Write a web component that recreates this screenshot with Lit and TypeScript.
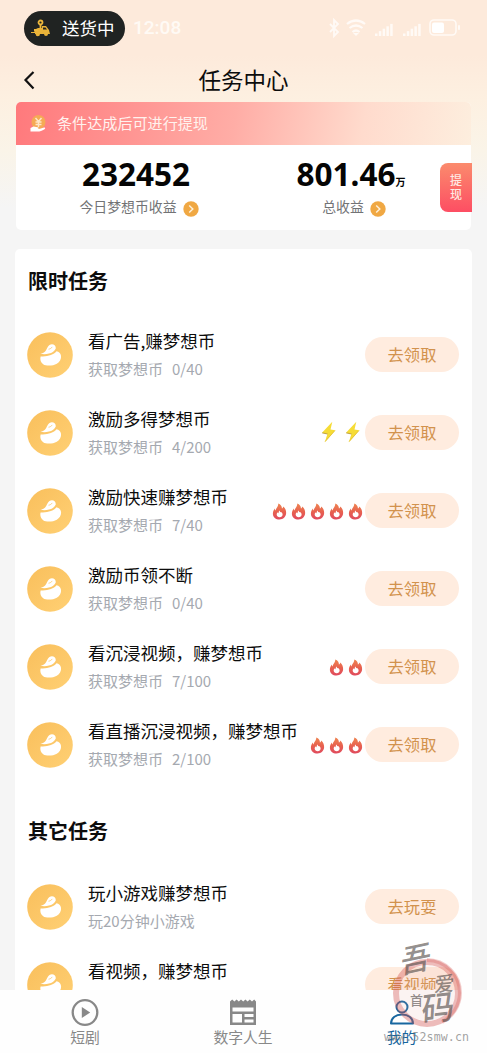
import { LitElement, html, svg, css } from "lit";
import { customElement, property } from "lit/decorators.js";

interface Task {
  title: string;
  note: string;
  count?: string;
  action: string;
  badge?: "fire" | "bolt";
  badges?: number;
}

const limited: Task[] = [
  { title: "看广告,赚梦想币", note: "获取梦想币", count: "0/40", action: "去领取" },
  { title: "激励多得梦想币", note: "获取梦想币", count: "4/200", action: "去领取", badge: "bolt", badges: 2 },
  { title: "激励快速赚梦想币", note: "获取梦想币", count: "7/40", action: "去领取", badge: "fire", badges: 5 },
  { title: "激励币领不断", note: "获取梦想币", count: "0/40", action: "去领取" },
  { title: "看沉浸视频，赚梦想币", note: "获取梦想币", count: "7/100", action: "去领取", badge: "fire", badges: 2 },
  { title: "看直播沉浸视频，赚梦想币", note: "获取梦想币", count: "2/100", action: "去领取", badge: "fire", badges: 3 },
];

const others: Task[] = [
  { title: "玩小游戏赚梦想币", note: "玩20分钟小游戏", action: "去玩耍" },
  { title: "看视频，赚梦想币", note: "", action: "看视频" },
];

const fire = html`<svg class="fire" width="15" height="17" viewBox="0 0 15 17">
  <defs>
    <linearGradient id="f" x1="0" y1="0" x2="0" y2="1">
      <stop offset="0" stop-color="#ee8552" />
      <stop offset=".5" stop-color="#e8624f" />
      <stop offset="1" stop-color="#e04a5e" />
    </linearGradient>
  </defs>
  <path fill="url(#f)" d="M6.200.6C8.800 1.500 10.100 3.500 9.900 5.600c.8-.3 1.200-1 1.200-2.100C13.500 5.300 14.300 8 14.100 10.600 13.800 14 11.200 16.500 7.500 16.500S1 14 .9 10.900C.8 8.800 1.600 6.900 2.900 5.400c0 .9.300 1.600.8 2C4 4.700 6.600 3.400 6.200.6z" />
  <path fill="#fff" d="M7.800 7.600c0 1.400.7 1.800 1.400 1.400 1 .8 1.500 1.800 1.400 2.800-.1 1.500-1.300 2.500-2.900 2.500s-2.900-1-3-2.500c-.1-1 .5-1.900 1.100-2.500 0 .6.300.9.700 1C6.600 9.300 6.800 8.200 7.800 7.600z" />
</svg>`;

const bolt = html`<svg class="bolt" width="15" height="22" viewBox="0 0 15 22">
  <path fill="#f6dc36" d="M11.300.8 1 11.800l5.400 1.100L3.800 21.200 14.200 9.300 9.500 8.400z" />
  <path fill="none" stroke="#b8983a" stroke-width=".9" d="M1.200 11.900l5.400 1.100" />
  <path fill="none" stroke="#e0bb2c" stroke-width=".8" d="M14 9.500 4.100 20.600" />
</svg>`;

@customElement("coin-badge")
class CoinBadge extends LitElement {
  static styles = css`
    :host { display: block; width: 46px; height: 46px; flex: none; }
    svg { display: block; }
  `;
  render() {
    return html`<svg width="46" height="46" viewBox="0 0 46 46">
      <defs>
        <linearGradient id="g" x1="0" y1="0" x2="1" y2="1">
          <stop offset="0" stop-color="#f9bf5c" />
          <stop offset="1" stop-color="#ffd074" />
        </linearGradient>
      </defs>
      <circle cx="23" cy="23" r="22.800" fill="url(#g)" />
      <path fill="#fff" d="M13.500 21.800c2.900-.6 4.300-1.600 5.700-3.900 1-1.800 1.700-3.600 3.300-4.800 1.500-1.100 3.800-1 5.100.2.900.9 1.300 2 1.100 3.400-1.400 2.600-3.800 4.200-6.700 4.900-2.900.8-5.700.9-8.500.2z" />
      <path fill="#fff" d="M13.600 24.400c3.800.3 7.100-.1 10.300-1.300 2.400-.9 4.200-2.200 5.600-3.800 2.400.5 4.100 2.100 4.500 4.400.5 3.100-1.200 6.200-4.200 8-3.800 2.200-10.400 2.700-13.600.5-2.400-1.700-3.400-4.700-2.600-7.800z" />
      <path d="M21.500 17.200c1.600-.2 2.900-1 3.800-2.300" fill="none" stroke="#fbc867" stroke-width=".8" />
    </svg>`;
  }
}

@customElement("task-row")
class TaskRow extends LitElement {
  @property({ attribute: false }) task!: Task;
  static styles = css`
    :host { display: flex; height: 78px; align-items: center; padding: 0 13px 0 12px; box-sizing: border-box; }
    .text { margin-left: 15px; flex: 1; white-space: nowrap; }
    .title { font-size: 17.5px; line-height: 28px; color: #0c0c0c; }
    .note { font-size: 15px; line-height: 28px; min-height: 28px; color: #a5a9b0; display: flex; gap: 9px; }
    .marks { display: flex; align-items: center; }
    .fire { display: block; margin: 0 2px; }
    .bolt { display: block; margin: 0 5px 2px 4px; }
    .go { width: 94px; height: 35px; border-radius: 18px; background: #ffecdf; color: #d2924d; margin-bottom: 1px;
      font-size: 16.300px; line-height: 34px; text-align: center; flex: none; }
  `;
  render() {
    const t = this.task;
    return html`<coin-badge></coin-badge>
      <div class="text">
        <div class="title">${t.title}</div>
        <div class="note"><span>${t.note}</span>${t.count ? html`<span>${t.count}</span>` : ""}</div>
      </div>
      <div class="marks">${Array.from({ length: t.badges ?? 0 }, () => (t.badge === "bolt" ? bolt : fire))}</div>
      <div class="go">${t.action}</div>`;
  }
}

@customElement("app-root")
class AppRoot extends LitElement {
  static styles = css`
    :host { display: flex; flex-direction: column; position: relative; width: 487px; height: 1053px; overflow: hidden;
      background: linear-gradient(#fdeadb 0, #fdeadb 55px, #fdf0e1 100px, #faf4e8 150px, #f5f5f5 208px);
      font-family: "Noto Sans CJK SC", sans-serif; color: #0c0c0c; }
    svg { display: block; flex: none; }
    .status { height: 56px; display: flex; align-items: center; padding: 0 26px 0 24px; box-sizing: border-box; flex: none; }
    .pill { width: 101px; height: 35px; border-radius: 18px; background: #202322; display: flex; align-items: center;
      padding-left: 6px; box-sizing: border-box; color: #fff; font-size: 17.500px; gap: 11px; line-height: 34px; }
    .pill span { margin-top: -1px; }
    .time { color: #fffaf5; font: 500 19px/24px Roboto, sans-serif; margin-left: 8px; flex: 1; }
    .head { height: 46px; display: grid; grid-template-columns: 60px 1fr 60px; align-items: center; flex: none; }
    .back { margin-left: 22px; margin-top: 2px; }
    .name { text-align: center; font-size: 22.500px; line-height: 40px; }
    .summary { margin: 0 16px; height: 128px; background: #fff; border-radius: 5px; flex: none; position: relative; }
    .banner { height: 43px; border-radius: 5px 5px 0 0;
      background: linear-gradient(100deg, #ff797c 0, #ffada6 48%, #ffdbcd 76%, #fdeede 100%);
      display: flex; align-items: center; padding-left: 12px; color: #fff2ee; font-size: 15.100px; gap: 9px; }
    .banner span { line-height: 38px; padding-bottom: 4px; }
    .stats { display: grid; grid-template-columns: 240px 190px; }
    .stat { display: flex; flex-direction: column; align-items: center; }
    .figure { font: bold 31.500px/36px "Noto Sans", sans-serif; padding-top: 11px; color: #050505; display: flex; align-items: baseline; }
    .unit { font: bold 10px/12px "Noto Sans CJK SC", sans-serif; }
    .label { font-size: 13.900px; line-height: 28px; color: #727375; display: flex; align-items: center; gap: 6px; }
    .label svg { margin-top: 6px; }
    .today .label { padding-left: 6px; }
    .total .figure { margin-left: 0; }
    .total .label { padding-left: 6px; }
    .cash { position: absolute; right: -1px; top: 61px; width: 32px; height: 49px; border-radius: 8px 0 0 8px; box-sizing: border-box;
      background: linear-gradient(#fb8b6d, #fd4e63); color: #ffe9e2; font-size: 12px; line-height: 14px; font-weight: 500;
      text-align: center; padding-top: 10px; }
    .cash span { display: block; }
    .tasks { margin: 19px 15px 0; background: #fff; border-radius: 5px 5px 0 0; height: 741px; overflow: hidden; flex: none; }
    h2 { margin: 0; font-size: 20px; font-weight: bold; line-height: 30px; padding: 17px 13px 20px; color: #0c0c0c; }
    .second { padding: 32px 13px 22px; }
    nav { height: 63px; background: #fefefe; display: grid; grid-template-columns: 170px 146px 171px; flex: none; }
    .tab { display: flex; flex-direction: column; align-items: center; color: #888; font-size: 14.800px; line-height: 20px; padding-top: 8px; gap: 1px; }
    .on { color: #17669f; }
    .mark { position: absolute; left: 380px; top: 938px; }
  `;

  arrow() {
    return html`<svg width="16" height="16" viewBox="0 0 16 16">
      <circle cx="8" cy="8" r="7.700" fill="#f0a843" />
      <path d="M6.200 4.500 9.800 8l-3.600 3.500" fill="none" stroke="#fff0d8" stroke-width="1.500" />
    </svg>`;
  }

  statusIcons() {
    const bars = (x: number) =>
      [0, 1, 2, 3, 4].map((i) => svg`<rect x=${x + i * 3.800} y=${16.500 - i * 2.400} width="2.500" height=${2.500 + i * 2.400} />`);
    return html`<svg width="134" height="22" viewBox="0 0 134 22" fill="#fffaf6">
      <path d="M3 7l8 8-4 4V3l4 4-8 8" fill="none" stroke="#fffaf6" stroke-width="1.800" />
      <g fill="none" stroke="#fffaf6" stroke-width="2.200">
        <path d="M20 7q9-7 18 0M22.500 11q6.500-5 13 0M25.500 15q3.500-3 7 0" />
      </g>
      <path d="M26 16h6l-3 3z" />
      ${bars(48)}${bars(76)}
      <rect x="103" y="3" width="26" height="15" rx="4" fill="none" stroke="#fffaf6" stroke-width="1.600" />
      <rect x="105" y="5.500" width="12" height="10.500" rx="2" fill="#fff" />
      <rect x="131" y="8" width="2" height="5" rx="1" />
    </svg>`;
  }

  render() {
    return html`
      <div class="status">
        <div class="pill">
          <svg width="21" height="18" viewBox="0 0 21 18">
            <path fill="#e9b339" d="M1 13h3l2-3 2-1h4V7h4l3 4 1 4h-2a2 2 0 0 1-4 0h-4a2.200 2.200 0 0 1-4.400 0H5v-1H1z" />
            <circle cx="10.500" cy="3.500" r="2" fill="none" stroke="#edb83d" stroke-width="1.800" />
            <path d="M10.500 5.500v4M4 11h4" stroke="#edb83d" stroke-width="1.800" />
            <path d="M13 8.500h2.500l1.500 2h-4z" fill="#202322" />
          </svg>
          <span>送货中</span>
        </div>
        <div class="time">12:08</div>
        ${this.statusIcons()}
      </div>
      <div class="head">
        <svg class="back" width="14" height="20" viewBox="0 0 14 20">
          <path d="M11.500 2 3.500 10l8 8.500" fill="none" stroke="#111" stroke-width="2.200" />
        </svg>
        <div class="name">任务中心</div>
      </div>
      <div class="summary">
        <div class="banner">
          <svg width="20" height="20" viewBox="0 0 20 20">
            <circle cx="10.500" cy="8" r="7" fill="#f5aa55" />
            <path d="M7.500 4l3 3.500L13.500 4M10.500 7.500V13M7.500 8h6M7.500 10.500h6" fill="none" stroke="#ffe6c8" stroke-width="1.500" />
            <path fill="#fff" d="M2.500 14l3-1.500 4 .8c1.500.2 1.500 1.500 0 1.700 3 .2 5-1.300 7-1.500 1 .2.800 1.200 0 1.700-2.500 1.800-4.500 2.300-7 2.300H2.500z" />
          </svg>
          <span>条件达成后可进行提现</span>
        </div>
        <div class="stats">
          <div class="stat today">
            <div class="figure">232452</div>
            <div class="label"><span>今日梦想币收益</span>${this.arrow()}</div>
          </div>
          <div class="stat total">
            <div class="figure">801.46<span class="unit">万</span></div>
            <div class="label"><span>总收益</span>${this.arrow()}</div>
          </div>
        </div>
        <div class="cash">提<br />现</div>
      </div>
      <div class="tasks">
        <h2>限时任务</h2>
        ${limited.map((t) => html`<task-row .task=${t}></task-row>`)}
        <h2 class="second">其它任务</h2>
        ${others.map((t) => html`<task-row .task=${t}></task-row>`)}
      </div>
      <nav>
        <div class="tab">
          <svg width="28" height="28" viewBox="0 0 28 28">
            <circle cx="14" cy="14.500" r="12.300" fill="none" stroke="#888" stroke-width="2.300" />
            <path d="M10.800 9v11l8.400-5.500z" fill="#888" />
          </svg>
          <span>短剧</span>
        </div>
        <div class="tab">
          <svg width="28" height="28" viewBox="0 0 28 28">
            <path fill="#888" fill-rule="evenodd" d="M1 3.500l2.200-2 2.200 2 2.200-2 2.200 2 2.200-2 2.200 2 2.200-2 2.200 2 2.200-2 2.200 2 2.200-2 1.800 2V27H1zM3.500 9.500v4h21v-4zM3.500 16v8.500H13V16zM15.500 16v3h9v-3zM15.500 21.500v3h9v-3z" />
          </svg>
          <span>数字人生</span>
        </div>
        <div class="tab on">
          <svg width="28" height="28" viewBox="0 0 28 28">
            <circle cx="14" cy="9" r="5.500" fill="none" stroke="#17669f" stroke-width="2" />
            <path d="M3 25.500c0-5.500 4.500-9 11-9s11 3.500 11 9z" fill="none" stroke="#17669f" stroke-width="2" stroke-linejoin="round" />
          </svg>
          <span>我的</span>
        </div>
      </nav>
      <svg class="mark" width="95" height="110" viewBox="0 0 95 110">
        <g fill="none">
          <circle cx="47" cy="55" r="31" stroke="#d3504c" stroke-opacity=".38" stroke-width="6" />
          <path d="M47 22a33 33 0 0 1 33 33 33 33 0 0 1-18 29" stroke="#d3504c" stroke-opacity=".28" stroke-width="4" />
          <circle cx="47" cy="55" r="28" fill="#e8a9a0" fill-opacity=".13" />
        </g>
        <g font-family="Noto Sans CJK SC, sans-serif" fill="#4d4744" fill-opacity=".62" font-weight="500">
          <text font-size="31" transform="translate(20 36) rotate(-12) skewX(-16)">吾</text>
          <text font-size="20" transform="translate(54 54) rotate(-5) skewX(-8)">爱</text>
          <text font-size="13" x="30" y="67">首</text>
          <text font-size="33" transform="translate(41 84) rotate(-7) skewX(-10)">码</text>
        </g>
        <text x="4" y="103" font-family="DejaVu Sans Mono, monospace" font-size="11.600" fill="#777" fill-opacity=".7" textLength="85">www.52smw.cn</text>
      </svg>
    `;
  }
}
